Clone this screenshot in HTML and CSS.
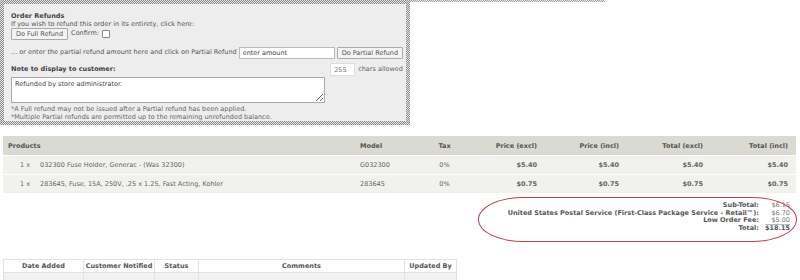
FILE: index.html
```html
<!DOCTYPE html>
<html>
<head>
  <title>Order Edit</title>
  <link rel="stylesheet" href="styles.css">
</head>
<body>
  <div class="top">
    <div class="refund-frame">
      <div class="refund">
        <div class="refund-title">Order Refunds</div>
        <div>If you wish to refund this order in its entirety, click here:</div>
        <div class="line">
          <button class="btn">Do Full Refund</button>
          <span>Confirm:</span>
          <span class="check"></span>
        </div>
        <div class="line partial">
          <span class="nowrap">... or enter the partial refund amount here and click on Partial Refund</span>
          <input class="amount" type="text" value="enter amount">
          <button class="btn">Do Partial Refund</button>
        </div>
        <div class="line note-head">
          <span class="refund-title">Note to display to customer:</span>
          <span class="chars"><input class="count" type="text" value="255"> chars allowed</span>
        </div>
        <textarea class="note">Refunded by store administrator.</textarea>
        <div class="foot">*A Full refund may not be issued after a Partial refund has been applied.</div>
        <div class="foot">*Multiple Partial refunds are permitted up to the remaining unrefunded balance.</div>
      </div>
    </div>
    <div class="top-rule"></div>
  </div>

  <table class="products">
    <colgroup>
      <col style="width: 32px">
      <col style="width: 320px">
      <col style="width: 65px">
      <col style="width: 52px">
      <col style="width: 73px">
      <col style="width: 82px">
      <col style="width: 84px">
      <col style="width: 85px">
    </colgroup>
    <tr class="head">
      <th colspan="2" class="left">Products</th>
      <th class="left">Model</th>
      <th class="center">Tax</th>
      <th class="right">Price (excl)</th>
      <th class="right">Price (incl)</th>
      <th class="right">Total (excl)</th>
      <th class="right">Total (incl)</th>
    </tr>
    <tr>
      <td class="qty">1&nbsp;x</td>
      <td>032300 Fuse Holder, Generac - (Was 32300)</td>
      <td>G032300</td>
      <td class="center">0%</td>
      <td class="right money">$5.40</td>
      <td class="right money">$5.40</td>
      <td class="right money">$5.40</td>
      <td class="right money">$5.40</td>
    </tr>
    <tr>
      <td class="qty">1&nbsp;x</td>
      <td>283645, Fuse, 15A, 250V, .25 x 1.25, Fast Acting, Kohler</td>
      <td>283645</td>
      <td class="center">0%</td>
      <td class="right money">$0.75</td>
      <td class="right money">$0.75</td>
      <td class="right money">$0.75</td>
      <td class="right money">$0.75</td>
    </tr>
  </table>

  <div class="totals-wrap">
    <div class="totals">
      <span class="label">Sub-Total:</span><span class="val">$6.15</span>
      <span class="label">United States Postal Service (First-Class Package Service - Retail&trade;):</span><span class="val">$6.70</span>
      <span class="label">Low Order Fee:</span><span class="val fee">$5.00</span>
      <span class="label">Total:</span><span class="val grand">$18.15</span>
    </div>
    <div class="circle"></div>
  </div>

  <table class="history">
    <tr>
      <th class="c-date">Date Added</th>
      <th class="c-notify">Customer Notified</th>
      <th class="c-status">Status</th>
      <th class="c-comments">Comments</th>
      <th class="c-by">Updated By</th>
    </tr>
    <tr class="hrow">
      <td></td><td></td><td></td><td></td><td></td>
    </tr>
  </table>
</body>
</html>
```

FILE: styles.css
```css
body {
  margin: 0;
  font-family: "DejaVu Sans", Verdana, sans-serif;
  font-size: 6.5px;
  color: #555;
  background: #fff;
}

.top {
  display: flex;
  align-items: flex-start;
}

.refund-frame {
  width: 410px;
  box-sizing: border-box;
  padding: 4px;
  background: repeating-conic-gradient(#8a8a8a 0 25%, #e4e4e4 0 50%) 0 0 / 2px 2px;
}

.top-rule {
  width: 195px;
  height: 2px;
  background: repeating-conic-gradient(#999 0 25%, #eee 0 50%) 0 0 / 2px 2px;
}

.refund {
  background: #ededed;
  padding: 9px 3px 0 7px;
  line-height: 7.5px;
}

.refund-title {
  font-weight: bold;
  color: #444;
}

.nowrap {
  white-space: nowrap;
}

.line {
  display: flex;
  align-items: center;
  gap: 3px;
}

.btn {
  flex-shrink: 0;
  white-space: nowrap;
  font-family: inherit;
  font-size: 6.5px;
  color: #555;
  background: #f3f3f3;
  border: 1px solid #aaa;
  border-radius: 1px;
  padding: 1px 4px;
  height: 12px;
  line-height: 8px;
}

.check {
  width: 6px;
  height: 6px;
  border: 1px solid #888;
  border-radius: 1px;
  background: #fff;
}

.partial {
  margin-top: 7px;
  gap: 2px;
}

.amount {
  flex-shrink: 0;
  font-family: inherit;
  font-size: 6.5px;
  color: #444;
  width: 96px;
  height: 12px;
  box-sizing: border-box;
  border: 1px solid #bbb;
  padding: 0 3px;
}

.note-head {
  margin-top: 4px;
  justify-content: space-between;
}

.chars {
  display: flex;
  align-items: center;
  gap: 3px;
  color: #666;
  white-space: nowrap;
}

.count {
  font-family: inherit;
  font-size: 6.5px;
  color: #777;
  width: 25px;
  height: 13px;
  box-sizing: border-box;
  border: 1px solid #ddd;
  padding: 0 3px;
  background: #fff;
}

.note {
  display: block;
  width: 314px;
  height: 26px;
  box-sizing: border-box;
  margin: 1px 0 3px;
  font-family: inherit;
  font-size: 6.5px;
  color: #444;
  border: 1px solid #aaa;
  padding: 2px 3px;
  resize: both;
}

.foot {
  color: #666;
}

.products {
  width: 793px;
  table-layout: fixed;
  margin: 11px 0 0 3px;
  border-collapse: collapse;
}

.products th {
  background: #dadad3;
  color: #555;
  font-weight: bold;
  height: 19px;
  padding: 0 8px 0 5px;
}

.products td {
  background: #f1f1ee;
  border-top: 1px solid #fff;
  height: 18px;
  padding: 0 8px 0 5px;
  color: #666;
  white-space: nowrap;
}

.products .qty {
  padding-left: 17px;
  padding-right: 2px;
}

.left { text-align: left; }
.center { text-align: center; }
.right { text-align: right; }

.products .money {
  font-weight: bold;
}

.totals-wrap {
  position: relative;
  display: flex;
  justify-content: flex-end;
  padding: 9px 10px 0 0;
  height: 42px;
}

.totals {
  display: grid;
  grid-template-columns: auto auto;
  grid-auto-rows: 7.5px;
  column-gap: 6px;
  line-height: 7.5px;
  align-content: start;
}

.totals .label {
  font-weight: bold;
  color: #555;
  text-align: right;
}

.totals .val {
  text-align: right;
  color: #777;
}

.totals .fee {
  box-shadow: inset 0 -1px 0 #bbb;
}

.totals .grand {
  font-weight: bold;
  color: #555;
}

.circle {
  position: absolute;
  left: 478px;
  top: 4px;
  width: 319px;
  height: 45px;
  box-sizing: border-box;
  border: 1.5px solid #c33a4b;
  border-radius: 45px / 22px;
}

.history {
  margin: 15px 0 0 3px;
  width: 454px;
  border-collapse: collapse;
}

.history th {
  border: 1px solid #e2e2e2;
  height: 12px;
  padding: 0;
  font-weight: bold;
  color: #555;
  text-align: center;
}

.history .hrow td {
  background: #f2f2f2;
  border: 1px solid #e2e2e2;
  height: 12px;
}

.c-date { width: 79px; }
.c-notify { width: 70px; }
.c-status { width: 43px; }
.c-by { width: 51px; }
```
